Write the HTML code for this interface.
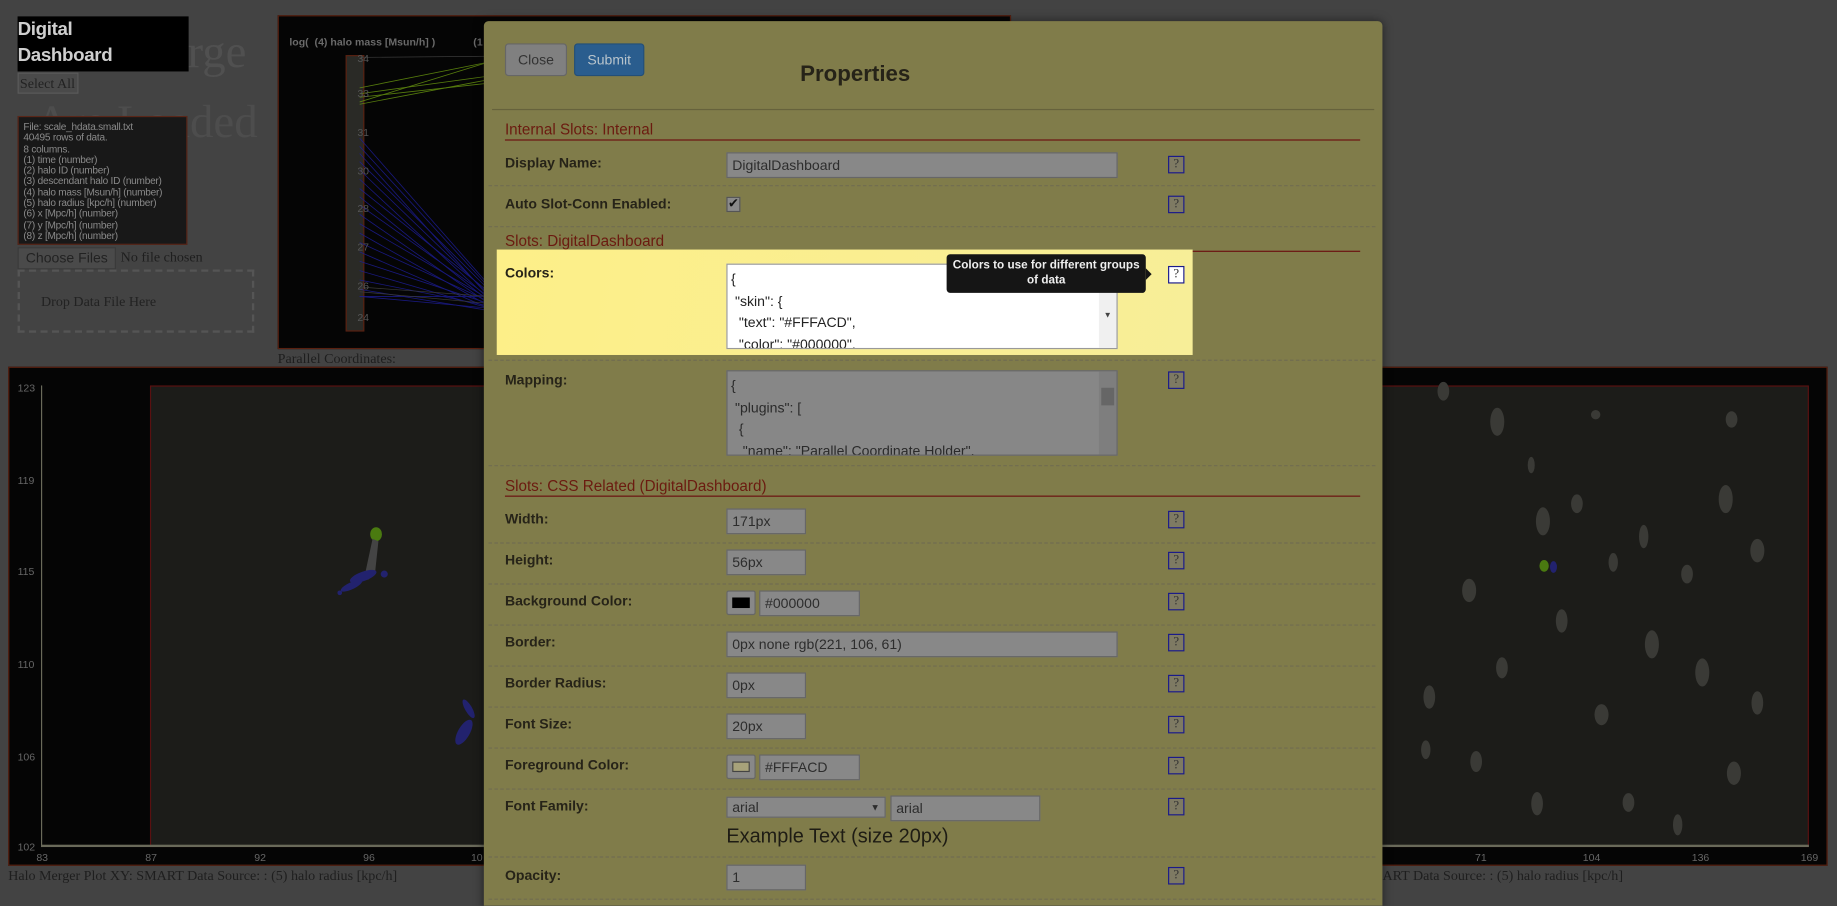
<!DOCTYPE html>
<html><head><meta charset="utf-8">
<style>
*{box-sizing:border-box;margin:0;padding:0}
html,body{width:1837px;height:906px;overflow:hidden;background:#434343}
#w{position:absolute;left:0;top:0;width:1568px;height:773px;overflow:hidden;transform:scale(1.17156);transform-origin:0 0;font-family:"Liberation Sans",Arial,sans-serif}
.a{position:absolute}
.serif{font-family:"Liberation Serif",serif}
#m{position:absolute;left:413px;top:18px;width:767px;height:760px;background:#807c4a;border-radius:4px 4px 0 0;box-shadow:0 0 8px rgba(0,0,0,.5)}
.lb{position:absolute;left:18px;font-size:12px;font-weight:bold;color:#262318}
.in{position:absolute;background:#888;border:1px solid #666;font-size:12px;color:#2d2d2d;padding:3px 4px;height:22px;line-height:14px;white-space:nowrap;overflow:hidden}
.q{position:absolute;left:584px;width:14px;height:15px;border:1px solid #1a1a8a;background:#7e7a63;font-size:11px;color:#333;text-align:center;line-height:13px;font-family:"Liberation Serif",serif}
.sep{position:absolute;left:4px;right:6px;border-top:1px dashed #706c50}
.sec{position:absolute;left:18px;width:730px;font-size:13px;color:#6b1b10;border-bottom:1px solid #6b1010;padding-bottom:1px}
</style></head><body><div id="w">

<div class="a serif" style="left:160px;top:20px;font-size:40px;color:#505050">rge</div>
<div class="a serif" style="left:30px;top:80px;font-size:40px;color:#4d4d4d">Are Loaded</div>
<div class="a" style="left:15px;top:14px;width:146px;height:47px;background:#000;color:#cfcfcf;font-weight:bold;font-size:16px;line-height:22px;padding-top:1px;letter-spacing:-.3px">Digital<br>Dashboard</div>
<div class="a serif" style="left:15px;top:62px;width:52px;height:18px;background:#4a4a4a;border:1px solid #5a5a5a;font-size:12px;color:#222;line-height:16px;padding-left:1px;white-space:nowrap">Select All</div>
<div class="a" style="left:15px;top:99px;width:145px;height:110px;background:#181818;border:1px solid #5a2618;font-size:8.6px;line-height:9.3px;color:#8a8a8a;padding:4px 4px;white-space:nowrap;letter-spacing:-.2px">File: scale_hdata.small.txt<br>40495 rows of data.<br>8 columns.<br>(1) time (number)<br>(2) halo ID (number)<br>(3) descendant halo ID (number)<br>(4) halo mass [Msun/h] (number)<br>(5) halo radius [kpc/h] (number)<br>(6) x [Mpc/h] (number)<br>(7) y [Mpc/h] (number)<br>(8) z [Mpc/h] (number)</div>
<div class="a" style="left:15px;top:211px;width:84px;height:19px;background:#4a4a4a;border:1px solid #3a3a3a;font-size:12px;color:#222;text-align:center;line-height:17px">Choose Files</div>
<div class="a serif" style="left:103px;top:212px;font-size:12px;color:#1e1e1e">No file chosen</div>
<div class="a serif" style="left:15px;top:230px;width:202px;height:54px;border:2px dashed #555;font-size:12px;color:#222;padding:18px 0 0 18px">Drop Data File Here</div>

<div class="a" style="left:237px;top:13px;width:626px;height:285px;background:#050505;border:1px solid #5a2010"></div>
<div class="a" style="left:247px;top:31px;font-size:9px;font-weight:bold;color:#6a6a6a">log(&nbsp; (4) halo mass [Msun/h] )</div>
<div class="a" style="left:404px;top:31px;font-size:9px;font-weight:bold;color:#6a6a6a">(1</div>
<div class="a" style="left:295px;top:47px;width:16px;height:236px;background:#2a2a26;border:1px solid #5a2010"></div>
<svg class="a" style="left:237px;top:13px" width="180" height="285">
<g stroke="#6b9a10" stroke-width=".7" opacity=".8"><line x1="70" y1="62" x2="180" y2="40"/><line x1="70" y1="67" x2="180" y2="52"/><line x1="70" y1="74" x2="180" y2="40"/><line x1="70" y1="76" x2="180" y2="55"/><line x1="70" y1="70" x2="180" y2="58"/></g>
<g stroke="#1e1e9a" stroke-width=".7" opacity=".8">
<line x1="70" y1="105" x2="180" y2="230"/><line x1="70" y1="112" x2="180" y2="232"/><line x1="70" y1="118" x2="180" y2="240"/><line x1="70" y1="125" x2="180" y2="234"/><line x1="70" y1="132" x2="180" y2="238"/><line x1="70" y1="140" x2="180" y2="242"/><line x1="70" y1="148" x2="180" y2="236"/><line x1="70" y1="155" x2="180" y2="244"/><line x1="70" y1="162" x2="180" y2="240"/><line x1="70" y1="170" x2="180" y2="246"/><line x1="70" y1="178" x2="180" y2="242"/><line x1="70" y1="186" x2="180" y2="248"/><line x1="70" y1="194" x2="180" y2="244"/><line x1="70" y1="202" x2="180" y2="250"/><line x1="70" y1="210" x2="180" y2="246"/><line x1="70" y1="218" x2="180" y2="250"/><line x1="70" y1="226" x2="180" y2="248"/><line x1="70" y1="234" x2="180" y2="252"/><line x1="70" y1="240" x2="180" y2="250"/><line x1="70" y1="240" x2="180" y2="240"/></g>
<g stroke="#3a3a3a" stroke-width=".6"><line x1="70" y1="36" x2="180" y2="35"/><line x1="70" y1="232" x2="180" y2="240"/><line x1="70" y1="236" x2="180" y2="246"/></g>
<g style="font-size:9px" fill="#555"><text x="68" y="40">34</text><text x="68" y="70">33</text><text x="68" y="103">31</text><text x="68" y="136">30</text><text x="68" y="168">28</text><text x="68" y="201">27</text><text x="68" y="234">26</text><text x="68" y="261">24</text></g>
</svg>
<div class="a serif" style="left:237px;top:299px;font-size:12px;color:#1e1e1e">Parallel Coordinates:</div>

<div class="a" style="left:7px;top:313px;width:1553px;height:426px;background:#050505;border:1px solid #5a2010"></div>
<div class="a" style="left:128px;top:329px;width:1416px;height:394px;background:#1c1c19;border:1px solid #5a1010"></div>
<div class="a" style="left:35px;top:329px;width:1px;height:394px;background:#6a6a5a"></div>
<div class="a" style="left:35px;top:721px;width:1509px;height:2px;background:#6a6a5a"></div>
<svg class="a" style="left:0;top:320px" width="1568" height="420">
<g font-size="9" fill="#666" font-family="Liberation Sans,sans-serif"><text x="15" y="14">123</text><text x="15" y="93">119</text><text x="15" y="171">115</text><text x="15" y="250">110</text><text x="15" y="329">106</text><text x="15" y="406">102</text>
<text x="31" y="415">83</text><text x="124" y="415">87</text><text x="217" y="415">92</text><text x="310" y="415">96</text><text x="402" y="415">10</text><text x="1259" y="415">71</text><text x="1351" y="415">104</text><text x="1444" y="415">136</text><text x="1537" y="415">169</text></g>
<ellipse cx="321" cy="136" rx="5" ry="6" fill="#4a7a10"/>
<path d="M318 140 L323 142 L320 170 L314 175 L312 168 Z" fill="#444"/>
<g fill="#22226e"><ellipse cx="310" cy="172" rx="12" ry="4" transform="rotate(-20 310 172)"/><ellipse cx="300" cy="180" rx="10" ry="3" transform="rotate(-25 300 180)"/><circle cx="290" cy="186" r="2"/><circle cx="328" cy="170" r="3"/></g>
<g fill="#22226e"><ellipse cx="400" cy="285" rx="3" ry="9" transform="rotate(-30 400 285)"/><ellipse cx="396" cy="305" rx="5" ry="12" transform="rotate(30 396 305)"/></g>
<g fill="#3a3a36">
<ellipse cx="1232" cy="14" rx="5" ry="8"/><ellipse cx="1278" cy="40" rx="6" ry="12"/><ellipse cx="1307" cy="77" rx="3" ry="7"/><ellipse cx="1362" cy="34" rx="4" ry="4"/><ellipse cx="1478" cy="38" rx="5" ry="7"/><ellipse cx="1473" cy="106" rx="6" ry="12"/><ellipse cx="1317" cy="125" rx="6" ry="12"/><ellipse cx="1346" cy="110" rx="5" ry="8"/><ellipse cx="1403" cy="138" rx="4" ry="10"/><ellipse cx="1440" cy="170" rx="5" ry="8"/><ellipse cx="1500" cy="150" rx="6" ry="10"/><ellipse cx="1377" cy="160" rx="4" ry="8"/><ellipse cx="1254" cy="184" rx="6" ry="10"/><ellipse cx="1333" cy="210" rx="5" ry="10"/><ellipse cx="1410" cy="230" rx="6" ry="12"/><ellipse cx="1282" cy="250" rx="5" ry="9"/><ellipse cx="1453" cy="254" rx="6" ry="12"/><ellipse cx="1220" cy="275" rx="5" ry="10"/><ellipse cx="1367" cy="290" rx="6" ry="9"/><ellipse cx="1500" cy="280" rx="5" ry="10"/><ellipse cx="1260" cy="330" rx="5" ry="9"/><ellipse cx="1217" cy="320" rx="4" ry="8"/><ellipse cx="1312" cy="366" rx="5" ry="10"/><ellipse cx="1432" cy="384" rx="4" ry="9"/><ellipse cx="1480" cy="340" rx="6" ry="10"/><ellipse cx="1390" cy="365" rx="5" ry="8"/></g>
<ellipse cx="1318" cy="163" rx="4" ry="5" fill="#4a7a10"/><ellipse cx="1326" cy="164" rx="3" ry="5" fill="#22226e"/>
</svg>
<div class="a serif" style="left:7px;top:740px;font-size:12px;color:#1e1e1e;white-space:nowrap">Halo Merger Plot XY: SMART Data Source: : (5) halo radius [kpc/h]</div>
<div class="a serif" style="left:1180px;top:740px;font-size:12px;color:#1e1e1e;white-space:nowrap">ART Data Source: : (5) halo radius [kpc/h]</div>

<div id="m">
<div class="a" style="left:18px;top:19px;width:53px;height:28px;background:#808080;border:1px solid #666;border-radius:3px;font-size:12px;color:#333;text-align:center;line-height:26px">Close</div>
<div class="a" style="left:77px;top:19px;width:60px;height:28px;background:#2a5d8e;border:1px solid #234f78;border-radius:3px;font-size:12px;color:#b8c4cc;text-align:center;line-height:26px">Submit</div>
<div class="a" style="left:270px;top:35px;font-size:19px;font-weight:bold;color:#262318">Properties</div>
<div class="a" style="left:7px;top:75px;width:753px;height:1px;background:#66623c"></div>

<div class="sec" style="top:85px">Internal Slots: Internal</div>
<div class="lb" style="top:114px">Display Name:</div>
<div class="in" style="left:207px;top:112px;width:334px">DigitalDashboard</div>
<div class="q" style="top:115px">?</div>
<div class="sep" style="top:140px"></div>
<div class="lb" style="top:149px">Auto Slot-Conn Enabled:</div>
<div class="a" style="left:207px;top:150px;width:12px;height:13px;background:#8a8a8a;border:1px solid #555;font-size:11px;line-height:11px;color:#111;text-align:center">✔</div>
<div class="q" style="top:149px">?</div>
<div class="sep" style="top:175px"></div>
<div class="sec" style="top:180px">Slots: DigitalDashboard</div>

<div class="a" style="left:11px;top:195px;width:594px;height:90px;background:linear-gradient(100deg,#fdef88,#f7ee98)"></div>
<div class="lb" style="top:208px">Colors:</div>
<div class="a" style="left:207px;top:207px;width:334px;height:73px;background:#fff;border:1px solid #999;font-size:12px;color:#222;line-height:18.5px;padding:3px 3px;white-space:pre;overflow:hidden">{
 "skin": {
  "text": "#FFFACD",
  "color": "#000000",</div>
<div class="a" style="left:525px;top:208px;width:15px;height:71px;background:#f0f0f0"></div>
<div class="a" style="left:529px;top:248px;font-size:7px;color:#444">▼</div>
<div class="a" style="left:395px;top:199px;width:170px;height:33px;background:#151515;border-radius:3px;color:#eee;font-size:10px;font-weight:bold;text-align:center;line-height:13px;padding-top:3px">Colors to use for different groups<br>of data</div>
<div class="a" style="left:565px;top:211px;width:0;height:0;border-top:5px solid transparent;border-bottom:5px solid transparent;border-left:5px solid #151515"></div>
<div class="q" style="top:209px;background:#fff">?</div>
<div class="sep" style="top:289px"></div>

<div class="lb" style="top:299px">Mapping:</div>
<div class="a" style="left:207px;top:298px;width:334px;height:73px;background:#878787;border:1px solid #666;font-size:12px;color:#2a2a2a;line-height:18.5px;padding:3px 3px;white-space:pre;overflow:hidden">{
 "plugins": [
  {
   "name": "Parallel Coordinate Holder",</div>
<div class="a" style="left:525px;top:299px;width:15px;height:71px;background:#7e7e7e"></div>
<div class="a" style="left:527px;top:313px;width:11px;height:15px;background:#666"></div>
<div class="q" style="top:299px">?</div>
<div class="sep" style="top:379px"></div>
<div class="sec" style="top:389px">Slots: CSS Related (DigitalDashboard)</div>

<div class="lb" style="top:418px">Width:</div><div class="in" style="left:207px;top:416px;width:68px">171px</div><div class="q" style="top:418px">?</div>
<div class="sep" style="top:445px"></div>
<div class="lb" style="top:453px">Height:</div><div class="in" style="left:207px;top:451px;width:68px">56px</div><div class="q" style="top:453px">?</div>
<div class="sep" style="top:480px"></div>
<div class="lb" style="top:488px">Background Color:</div>
<div class="a" style="left:207px;top:486px;width:25px;height:21px;background:#888;border:1px solid #666;border-radius:2px"><div style="margin:5px 0 0 4px;width:15px;height:9px;background:#000"></div></div>
<div class="in" style="left:235px;top:486px;width:86px">#000000</div><div class="q" style="top:488px">?</div>
<div class="sep" style="top:515px"></div>
<div class="lb" style="top:523px">Border:</div><div class="in" style="left:207px;top:521px;width:334px">0px none rgb(221, 106, 61)</div><div class="q" style="top:523px">?</div>
<div class="sep" style="top:550px"></div>
<div class="lb" style="top:558px">Border Radius:</div><div class="in" style="left:207px;top:556px;width:68px">0px</div><div class="q" style="top:558px">?</div>
<div class="sep" style="top:585px"></div>
<div class="lb" style="top:593px">Font Size:</div><div class="in" style="left:207px;top:591px;width:68px">20px</div><div class="q" style="top:593px">?</div>
<div class="sep" style="top:620px"></div>
<div class="lb" style="top:628px">Foreground Color:</div>
<div class="a" style="left:207px;top:626px;width:25px;height:21px;background:#888;border:1px solid #666;border-radius:2px"><div style="margin:5px 0 0 4px;width:15px;height:9px;background:#a7a27a;border:1px solid #444"></div></div>
<div class="in" style="left:235px;top:626px;width:86px">#FFFACD</div><div class="q" style="top:628px">?</div>
<div class="sep" style="top:655px"></div>
<div class="lb" style="top:663px">Font Family:</div>
<div class="in" style="left:207px;top:662px;width:136px;height:18px;padding-top:1px">arial<span style="position:absolute;right:4px;top:2px;font-size:8px">▼</span></div>
<div class="in" style="left:347px;top:661px;width:128px">arial</div><div class="q" style="top:663px">?</div>
<div class="a" style="left:207px;top:686px;font-size:17px;color:#1e1c14">Example Text (size 20px)</div>
<div class="sep" style="top:713px"></div>
<div class="lb" style="top:722px">Opacity:</div><div class="in" style="left:207px;top:720px;width:68px">1</div><div class="q" style="top:722px">?</div>
<div class="sep" style="top:749px"></div>
</div>
</div></body></html>
